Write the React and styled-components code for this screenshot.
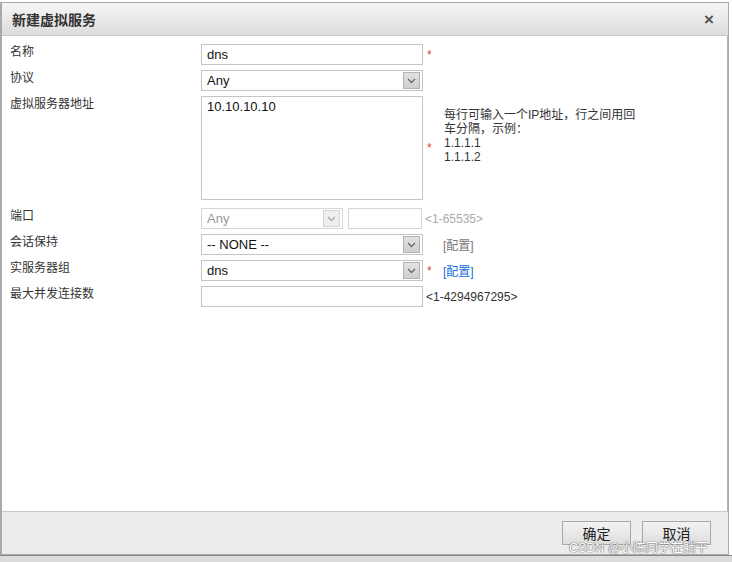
import React from "react";
import styled, { createGlobalStyle } from "styled-components";

const Global = createGlobalStyle`
  html, body {
    margin: 0;
    padding: 0;
    background: #ffffff;
  }
  body {
    font-family: "Liberation Sans", "Noto Sans CJK SC", sans-serif;
    font-size: 12px;
    color: #333;
  }
`;

const Chevron = ({ color = "#666" }) => (
  <svg width="9" height="6" viewBox="0 0 9 6">
    <path d="M1 1 L4.5 4.5 L8 1" fill="none" stroke={color} strokeWidth="1.3" />
  </svg>
);

const Select = ({ value, width = 222, disabled }) => (
  <SelectBox $width={width} $disabled={disabled}>
    <span>{value}</span>
    <ArrowBtn $disabled={disabled}>
      <Chevron color={disabled ? "#aaa" : "#666"} />
    </ArrowBtn>
  </SelectBox>
);

export default function App() {
  return (
    <Page>
      <Global />
      <Dialog>
        <TitleBar>
          <Title>新建虚拟服务</Title>
          <Close>×</Close>
        </TitleBar>
        <Body>
          <Form>
            <Label>名称</Label>
            <Field>
              <Input>dns</Input>
              <Star>*</Star>
            </Field>

            <Label>协议</Label>
            <Field>
              <Select value="Any" />
            </Field>

            <Label>虚拟服务器地址</Label>
            <Field $tall>
              <TextArea>10.10.10.10</TextArea>
              <Star>*</Star>
              <Hint>
                每行可输入一个IP地址，行之间用回
                <br />
                车分隔，示例：
                <br />
                1.1.1.1
                <br />
                1.1.1.2
              </Hint>
            </Field>

            <Label>端口</Label>
            <Field>
              <Select value="Any" width={142} disabled />
              <Input $width={74} $disabled $ml={5} />
              <Range $muted>&lt;1-65535&gt;</Range>
            </Field>

            <Label>会话保持</Label>
            <Field>
              <Select value="-- NONE --" />
              <Config>[配置]</Config>
            </Field>

            <Label>实服务器组</Label>
            <Field>
              <Select value="dns" />
              <Star>*</Star>
              <Config $link $ml={10}>[配置]</Config>
            </Field>

            <Label>最大并发连接数</Label>
            <Field>
              <Input />
              <Range>&lt;1-4294967295&gt;</Range>
            </Field>
          </Form>
        </Body>
        <Footer>
          <Button>确定</Button>
          <Button>取消</Button>
          <Watermark>CSDN @小陈同学在躺平</Watermark>
        </Footer>
      </Dialog>
      <Behind />
    </Page>
  );
}

const Page = styled.div`
  width: 732px;
  height: 562px;
  overflow: hidden;
  background: #ffffff;
  display: flex;
  flex-direction: column;
`;

const Dialog = styled.div`
  width: 729px;
  margin-top: 2px;
  border: 1px solid #a9a9a9;
  border-left-width: 2px;
  background: #ececec;
  display: flex;
  flex-direction: column;
  box-sizing: border-box;
`;

const TitleBar = styled.div`
  height: 32px;
  display: flex;
  align-items: center;
  justify-content: space-between;
  padding: 0 14px 0 10px;
  background: linear-gradient(#f6f6f6, #dcdcdc);
  border-bottom: 1px solid #c8c8c8;
`;

const Title = styled.div`
  font-size: 14px;
  font-weight: bold;
  color: #333;
`;

const Close = styled.div`
  font-size: 17px;
  font-weight: bold;
  color: #555;
  line-height: 1;
`;

const Body = styled.div`
  height: 476px;
  background: #ffffff;
  border-right: 1px solid #b5b5b5;
  border-bottom: 1px solid #c8c8c8;
  padding: 8px 0 0 8px;
  box-sizing: border-box;
`;

const Form = styled.div`
  display: grid;
  grid-template-columns: 191px 1fr;
  row-gap: 5px;
`;

const Label = styled.div`
  font-size: 12px;
  color: #333;
  line-height: 14px;
  padding-top: 1px;
`;

const Field = styled.div`
  display: flex;
  align-items: center;
  min-height: 21px;
  margin-bottom: ${(p) => (p.$tall ? "3px" : "0")};
`;

const Input = styled.div`
  width: ${(p) => p.$width || 222}px;
  height: 21px;
  margin-left: ${(p) => p.$ml || 0}px;
  box-sizing: border-box;
  border: 1px solid ${(p) => (p.$disabled ? "#d6d6d6" : "#c4c4c4")};
  background: #fff;
  padding: 0 5px;
  font-size: 13px;
  color: #111;
  line-height: 19px;
`;

const SelectBox = styled.div`
  width: ${(p) => p.$width}px;
  height: 21px;
  box-sizing: border-box;
  border: 1px solid ${(p) => (p.$disabled ? "#d6d6d6" : "#c4c4c4")};
  background: #fff;
  display: flex;
  align-items: center;
  justify-content: space-between;
  padding: 0 1px 0 5px;
  font-size: 13px;
  color: ${(p) => (p.$disabled ? "#999" : "#111")};
`;

const ArrowBtn = styled.div`
  width: 17px;
  height: 17px;
  box-sizing: border-box;
  border: 1px solid ${(p) => (p.$disabled ? "#d2d2d2" : "#b3b3b3")};
  background: ${(p) => (p.$disabled ? "#eeeeee" : "linear-gradient(#e2e2e2, #cfcfcf)")};
  display: flex;
  align-items: center;
  justify-content: center;
  margin-right: 1px;
`;

const TextArea = styled.div`
  width: 222px;
  height: 104px;
  box-sizing: border-box;
  border: 1px solid #c4c4c4;
  padding: 2px 5px;
  font-size: 13px;
  color: #111;
  align-self: flex-start;
`;

const Star = styled.span`
  color: #e23a3a;
  font-size: 12px;
  margin-left: 4px;
  width: 6px;
`;

const Hint = styled.div`
  margin-left: 11px;
  font-size: 12px;
  line-height: 14px;
  color: #333;
  align-self: flex-start;
  margin-top: 12px;
`;

const Range = styled.span`
  margin-left: 3px;
  font-size: 12px;
  color: ${(p) => (p.$muted ? "#aaa" : "#333")};
`;

const Config = styled.span`
  margin-left: ${(p) => p.$ml || 20}px;
  font-size: 12px;
  color: ${(p) => (p.$link ? "#1a6fe0" : "#777")};
`;

const Footer = styled.div`
  height: 42px;
  display: flex;
  align-items: flex-start;
  justify-content: flex-end;
  gap: 11px;
  padding: 9px 17px 0 0;
  box-sizing: border-box;
  position: relative;
  background: #ececec;
`;

const Button = styled.div`
  width: 69px;
  height: 24px;
  box-sizing: border-box;
  border: 1px solid #a8a8a8;
  background: linear-gradient(#f3f3f3, #dedede);
  display: flex;
  align-items: center;
  justify-content: center;
  font-size: 14px;
  color: #222;
`;

const Watermark = styled.div`
  position: absolute;
  right: 20px;
  bottom: 0;
  line-height: 12px;
  font-size: 12.5px;
  color: #ffffff;
  text-shadow: 0 0 1px #777, 0 0 1px #777, 0 0 1px #777;
`;

const Behind = styled.div`
  flex: 1;
  background: #dcdcdc;
  border-top: 1px solid #8a8a8a;
`;
